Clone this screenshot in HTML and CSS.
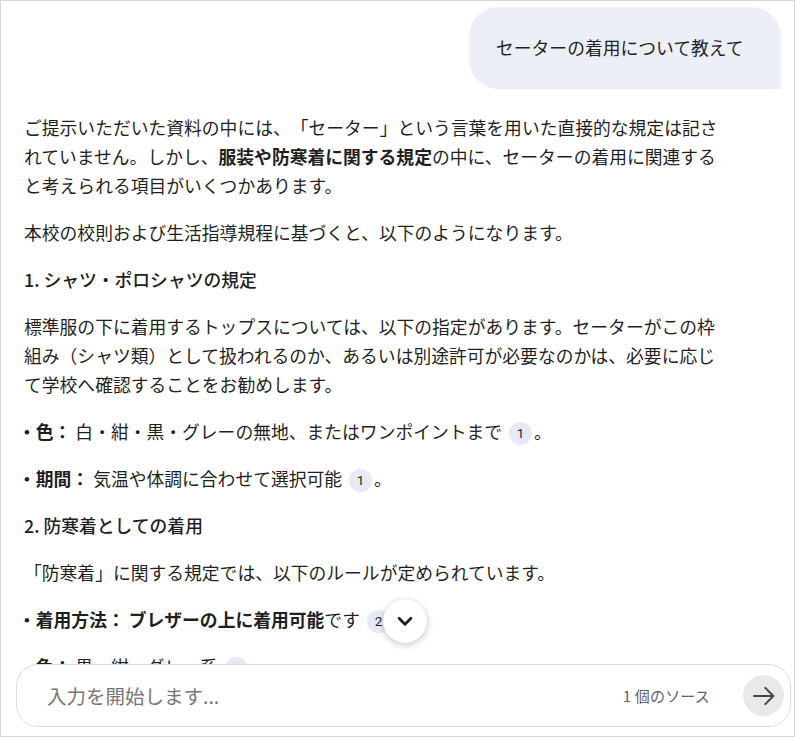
FILE: index.html
```html
<!DOCTYPE html>
<html lang="ja">
<head>
<meta charset="utf-8">
<title>チャット</title>
<link rel="stylesheet" href="styles.css">
</head>
<body>
<div class="frame">
  <div class="panel">
    <div class="chat">
      <div class="user-row">
        <div class="bubble">セーターの着用について教えて</div>
      </div>
      <div class="answer">
        <p>ご提示いただいた資料の中には、「セーター」という言葉を用いた直接的な規定は記されていません。しかし、<strong>服装や防寒着に関する規定</strong>の中に、セーターの着用に関連すると考えられる項目がいくつかあります。</p>
        <p>本校の校則および生活指導規程に基づくと、以下のようになります。</p>
        <p class="heading">1. シャツ・ポロシャツの規定</p>
        <p>標準服の下に着用するトップスについては、以下の指定があります。セーターがこの枠組み（シャツ類）として扱われるのか、あるいは別途許可が必要なのかは、必要に応じて学校へ確認することをお勧めします。</p>
        <p><strong><span class="dot">・</span>色：</strong> 白・紺・黒・グレーの無地、またはワンポイントまで<span class="cite">1</span>。</p>
        <p><strong><span class="dot">・</span>期間：</strong> 気温や体調に合わせて選択可能<span class="cite">1</span>。</p>
        <p class="heading">2. 防寒着としての着用</p>
        <p>「防寒着」に関する規定では、以下のルールが定められています。</p>
        <p><strong><span class="dot">・</span>着用方法： ブレザーの上に着用可能</strong>です<span class="cite">2</span>。</p>
        <p><strong><span class="dot">・</span>色：</strong> 黒・紺・グレー系<span class="cite">2</span>。</p>
        <p>学校指定のものは特にありません。</p>
      </div>
    </div>
    <div class="footer">
      <div class="input-bar">
        <span class="placeholder">入力を開始します...</span>
        <span class="sources">1 個のソース</span>
        <button class="send" aria-label="送信">
          <svg width="30" height="30" viewBox="0 0 24 24" fill="none" stroke="#454545" stroke-width="1.6" stroke-linecap="round" stroke-linejoin="round"><path d="M4 12h15.5M13 5.5l6.5 6.5-6.5 6.5"/></svg>
        </button>
      </div>
    </div>
    <button class="scroll-down" aria-label="下へスクロール">
      <svg width="26" height="26" viewBox="0 0 24 24" fill="none" stroke="#1f1f1f" stroke-width="2.6" stroke-linecap="round" stroke-linejoin="round"><path d="M6.5 9.5l5.5 5.5 5.5-5.5"/></svg>
    </button>
  </div>
</div>
</body>
</html>
```

FILE: styles.css
```css
* { box-sizing: border-box; }

html, body {
  margin: 0;
  padding: 0;
  background: #ffffff;
}

body {
  font-family: "Noto Sans CJK JP", "Noto Sans", sans-serif;
  color: #1f1f1f;
  text-spacing-trim: space-all;
}

.frame {
  width: 800px;
  height: 737px;
  background: #ffffff;
}

.panel {
  position: relative;
  width: 795px;
  height: 737px;
  border: 1px solid #d6d6d6;
  display: flex;
  flex-direction: column;
  background: #ffffff;
}

.chat {
  flex: 1;
  overflow: hidden;
  padding: 6px 13px 0 23px;
}

.user-row {
  display: flex;
  justify-content: flex-end;
}

.bubble {
  width: 312px;
  height: 82px;
  padding: 26px 0 0 27px;
  background: #eceef8;
  border-radius: 30px 30px 0 30px;
  font-size: 17.8px;
  line-height: 29px;
  white-space: nowrap;
}

.answer {
  margin-top: 24px;
  width: 700px;
  font-size: 17.8px;
  line-height: 29px;
}

.answer p {
  margin: 0 0 18px;
}

.answer strong {
  font-weight: 700;
}

.answer .heading {
  font-weight: 500;
}

.dot {
  margin-left: -6px;
}

.cite {
  display: inline-flex;
  align-items: center;
  justify-content: center;
  width: 23px;
  height: 23px;
  margin: 0 2px 0 7px;
  border-radius: 50%;
  background: #e6e9f6;
  color: #1f1f1f;
  font-family: Roboto, "Noto Sans", sans-serif;
  font-size: 13.5px;
  font-weight: 400;
  line-height: 1;
  vertical-align: 1px;
}

.footer {
  flex: none;
  padding: 0 3px 9px 15px;
  background: #ffffff;
}

.input-bar {
  height: 63px;
  border: 1px solid #dcdcdc;
  border-radius: 22px;
  display: flex;
  align-items: center;
  padding: 0 6px 0 30px;
  background: #ffffff;
}

.placeholder {
  flex: 1;
  font-size: 19.5px;
  color: #767676;
}

.sources {
  font-size: 15px;
  color: #5f6368;
  margin-right: 33px;
  letter-spacing: 0.2px;
}

.send {
  width: 41px;
  height: 41px;
  border: none;
  border-radius: 50%;
  background: #e9e9e9;
  display: flex;
  align-items: center;
  justify-content: center;
  padding: 0;
}

.scroll-down {
  position: absolute;
  left: 382px;
  top: 598px;
  width: 44px;
  height: 44px;
  border: none;
  border-radius: 50%;
  background: #ffffff;
  box-shadow: 0 2px 7px rgba(0, 0, 0, 0.22), 0 0 2px rgba(0, 0, 0, 0.08);
  display: flex;
  align-items: center;
  justify-content: center;
  padding: 0;
}
```
